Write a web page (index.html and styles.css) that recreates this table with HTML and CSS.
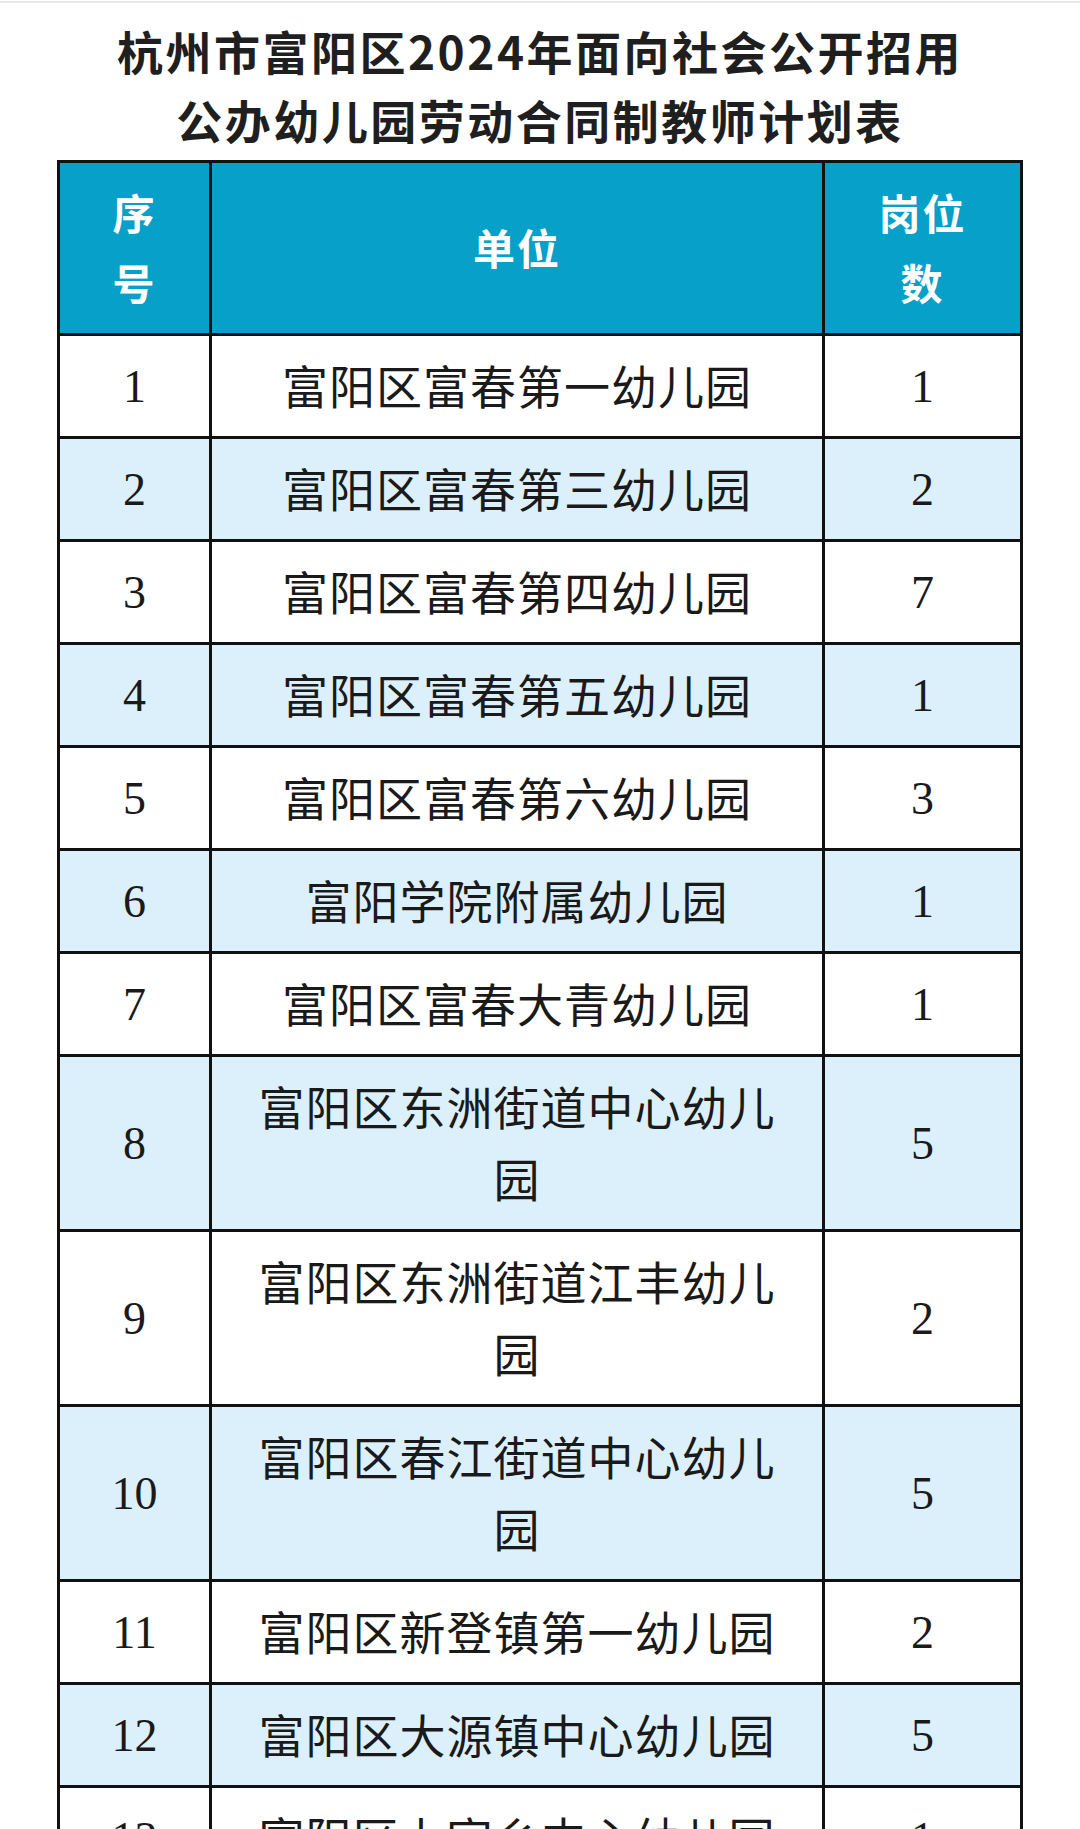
FILE: index.html
```html
<!DOCTYPE html>
<html lang="zh-CN">
<head>
<meta charset="utf-8">
<title>杭州市富阳区2024年面向社会公开招用公办幼儿园劳动合同制教师计划表</title>
<link rel="stylesheet" href="styles.css">
</head>
<body>
<div class="topline"></div>
<h1 class="title">杭州市富阳区2024年面向社会公开招用<br>公办幼儿园劳动合同制教师计划表</h1>
<table class="plan">
  <colgroup>
    <col class="c-no">
    <col class="c-unit">
    <col class="c-num">
  </colgroup>
  <thead>
    <tr><th>序号</th><th>单位</th><th>岗位数</th></tr>
  </thead>
  <tbody>
    <tr><td class="n">1</td><td>富阳区富春第一幼儿园</td><td class="n">1</td></tr>
    <tr class="alt"><td class="n">2</td><td>富阳区富春第三幼儿园</td><td class="n">2</td></tr>
    <tr><td class="n">3</td><td>富阳区富春第四幼儿园</td><td class="n">7</td></tr>
    <tr class="alt"><td class="n">4</td><td>富阳区富春第五幼儿园</td><td class="n">1</td></tr>
    <tr><td class="n">5</td><td>富阳区富春第六幼儿园</td><td class="n">3</td></tr>
    <tr class="alt"><td class="n">6</td><td>富阳学院附属幼儿园</td><td class="n">1</td></tr>
    <tr><td class="n">7</td><td>富阳区富春大青幼儿园</td><td class="n">1</td></tr>
    <tr class="alt"><td class="n">8</td><td>富阳区东洲街道中心幼儿园</td><td class="n">5</td></tr>
    <tr><td class="n">9</td><td>富阳区东洲街道江丰幼儿园</td><td class="n">2</td></tr>
    <tr class="alt"><td class="n">10</td><td>富阳区春江街道中心幼儿园</td><td class="n">5</td></tr>
    <tr><td class="n">11</td><td>富阳区新登镇第一幼儿园</td><td class="n">2</td></tr>
    <tr class="alt"><td class="n">12</td><td>富阳区大源镇中心幼儿园</td><td class="n">5</td></tr>
    <tr><td class="n">13</td><td>富阳区上官乡中心幼儿园</td><td class="n">1</td></tr>
  </tbody>
</table>
</body>
</html>
```

FILE: styles.css
```css
html, body {
  margin: 0;
  padding: 0;
  background: #ffffff;
}

body {
  font-family: "Noto Sans CJK SC", "Noto Sans", sans-serif;
  color: #1a1a1a;
  overflow: hidden;
}

.topline {
  height: 2px;
  margin-top: 1px;
  background: #e9e9e9;
}

.title {
  margin: 13px 0 0;
  font-size: 46px;
  line-height: 69px;
  font-weight: 700;
  letter-spacing: 2.5px;
  text-align: center;
  color: #1f1f1f;
}

.plan {
  margin: 6px 0 0 57px;
  width: 963px;
  table-layout: fixed;
  border-collapse: collapse;
  border: 3px solid #111;
}

.c-no { width: 152px; }
.c-unit { width: 613px; }
.c-num { width: 198px; }

.plan th,
.plan td {
  border: 3px solid #111;
  padding: 12px 34px 16px;
  text-align: center;
  vertical-align: middle;
}

.plan th {
  background: #07a0c9;
  color: #ffffff;
  font-size: 42px;
  font-weight: 700;
  line-height: 70px;
  letter-spacing: 2px;
  padding-top: 14px;
  padding-bottom: 16px;
}

.plan td {
  font-size: 46px;
  font-weight: 400;
  line-height: 72px;
  letter-spacing: 1px;
  color: #1a1a1a;
}

.plan td.n {
  font-family: "Liberation Serif", "Times New Roman", serif;
  letter-spacing: 0;
  padding: 15px 10px 13px;
}

.plan tr.alt td {
  background: #dcf0fc;
}
```
